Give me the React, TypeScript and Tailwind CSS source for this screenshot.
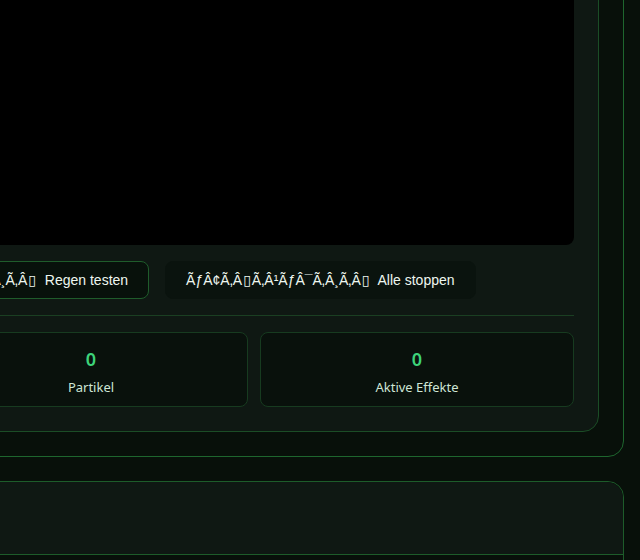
import React from "react";

// button labels as they come out of the (broken) emoji encoding, "#" = missing glyph
const RAIN = "ÃƒÂ°Ã…Â¸Ã…â€™Ã‚Â§ÃƒÂ¯Ã‚Â¸Ã‚Â#";
const STOP = "ÃƒÂ¢Ã‚Â#Ã‚Â¹ÃƒÂ¯Ã‚Â¸Ã‚Â#";

function Garbled({ text }: { text: string }) {
  const parts = text.split("#");
  return (
    <>
      {parts.map((p, i) => (
        <React.Fragment key={i}>
          {p}
          {i < parts.length - 1 && <span className="px-px">{"\u25af"}</span>}
        </React.Fragment>
      ))}
    </>
  );
}

const stats = [
  { value: "60", label: "FPS" },
  { value: "0", label: "Partikel" },
  { value: "0", label: "Aktive Effekte" },
];

export default function App() {
  return (
    <div className="h-[560px] w-[640px] overflow-hidden bg-[#08100a]">
      <div className="-mt-[221px] -ml-[458px] flex w-[1098px] flex-col gap-6 p-4">
        {/* effect preview */}
        <section className="rounded-2xl border border-[#1e662e] bg-[#08100a] p-6">
          <div className="rounded-2xl border border-[#1b4d26] bg-[#0f1813] p-6">
            <div className="h-[400px] rounded-lg bg-black" />

            <div className="mt-4 flex gap-4 font-['Liberation_Sans','DejaVu_Sans',Arial,sans-serif] text-sm text-[#eef7f0]">
              <button className="w-[148px] shrink-0 rounded-lg border border-[#1f5c2b] bg-[#08110b] px-5 py-2">
                Alle testen
              </button>
              <button className="shrink-0 whitespace-pre rounded-lg border border-[#1f5c2b] bg-[#08110b] px-5 py-2">
                <Garbled text={RAIN} />  Regen testen
              </button>
              <button className="shrink-0 whitespace-pre rounded-lg border border-[#0a130e] bg-[#0a130e] px-5 py-2">
                <Garbled text={STOP} />  Alle stoppen
              </button>
            </div>

            <div className="mt-4 grid grid-cols-3 gap-3 border-t border-[#1a3f22] pt-4 font-['Noto_Sans',sans-serif]">
              {stats.map((s) => (
                <div
                  key={s.label}
                  className="flex flex-col items-center rounded-lg border border-[#173b20] bg-[#09110c] px-3 pt-3 pb-[11px]"
                >
                  <span className="text-lg leading-7 font-semibold text-[#3dd37a]">{s.value}</span>
                  <span className="mt-[6px] text-[13px] leading-4 text-[#cfe6d6]">{s.label}</span>
                </div>
              ))}
            </div>
          </div>
        </section>

        {/* effect list */}
        <section className="rounded-2xl border border-[#1d5c2a] bg-[#08100a]">
          <div className="rounded-t-2xl border-b border-[#1d5c2a] bg-[#0f1813] p-6 font-['Noto_Sans',sans-serif]">
            <h2 className="text-base leading-6 font-semibold text-[#3dd37a]">Effekte</h2>
          </div>
          <div className="h-[200px]" />
        </section>
      </div>
    </div>
  );
}
